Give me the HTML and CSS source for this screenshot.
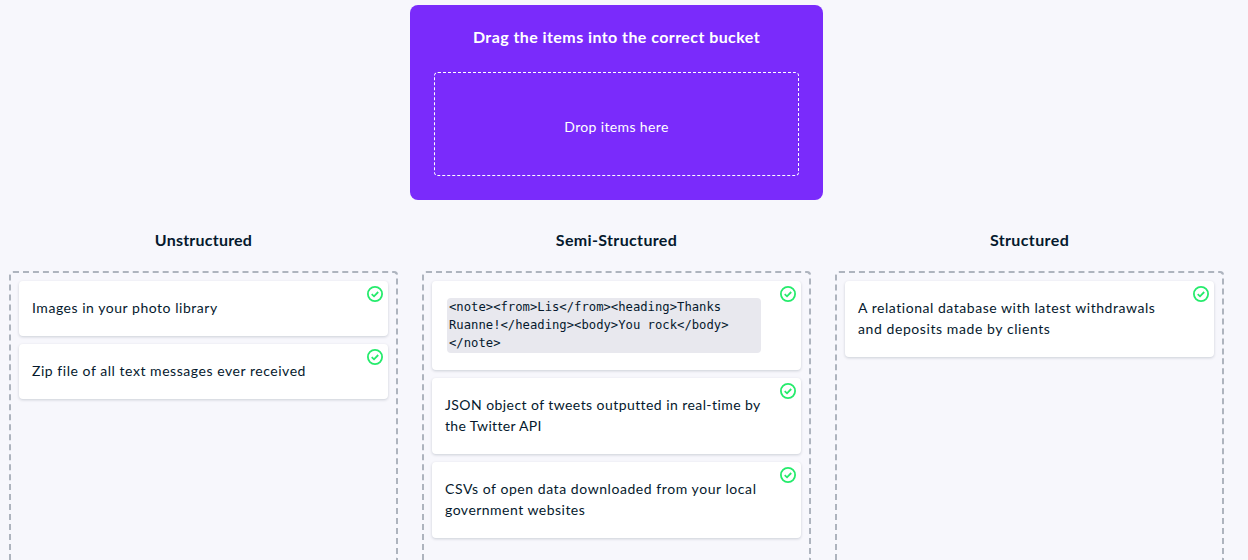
FILE: index.html
```html
<!DOCTYPE html>
<html lang="en">
<head>
<meta charset="utf-8">
<title>Drag and drop exercise</title>
<link rel="stylesheet" href="styles.css">
</head>
<body>
<svg class="defs" width="0" height="0">
  <symbol id="check" viewBox="0 0 18 18">
    <circle cx="9" cy="9" r="7.1"/>
    <path d="M5.7 9.2 8 11.3 12.2 7"/>
  </symbol>
</svg>
<main class="exercise">
  <section class="source">
    <h2 class="title t-drag">Drag the items into the correct bucket</h2>
    <div class="dropzone"><span class="t-drop">Drop items here</span></div>
  </section>
  <div class="buckets">
    <section class="column">
      <h2 class="title t-un">Unstructured</h2>
      <div class="bucket">
        <article class="card"><p class="t-images">Images in your photo library</p><svg class="icon"><use href="#check"/></svg></article>
        <article class="card"><p class="t-zip">Zip file of all text messages ever received</p><svg class="icon"><use href="#check"/></svg></article>
      </div>
    </section>
    <section class="column">
      <h2 class="title t-semi">Semi-Structured</h2>
      <div class="bucket">
        <article class="card"><code class="code">&lt;note&gt;&lt;from&gt;Lis&lt;/from&gt;&lt;heading&gt;Thanks<br>Ruanne!&lt;/heading&gt;&lt;body&gt;You rock&lt;/body&gt;<br>&lt;/note&gt;</code><svg class="icon"><use href="#check"/></svg></article>
        <article class="card"><p class="t-json">JSON object of tweets outputted in real-time by</p><p class="t-api">the Twitter API</p><svg class="icon"><use href="#check"/></svg></article>
        <article class="card"><p class="t-csv">CSVs of open data downloaded from your local</p><p class="t-gov">government websites</p><svg class="icon"><use href="#check"/></svg></article>
      </div>
    </section>
    <section class="column">
      <h2 class="title t-str">Structured</h2>
      <div class="bucket">
        <article class="card"><p class="t-rel">A relational database with latest withdrawals</p><p class="t-dep">and deposits made by clients</p><svg class="icon"><use href="#check"/></svg></article>
      </div>
    </section>
  </div>
</main>
</body>
</html>
```
FILE: styles.css
```css
* { box-sizing: border-box; }
body {
  margin: 0;
  background: #f7f7fc;
  color: #05192d;
  font: 14px/21px Lato, sans-serif;
  letter-spacing: 0.5px;
}
.defs { display: block; }
.exercise {
  display: flex;
  flex-direction: column;
  width: 1215px;
  height: 560px;
  margin-left: 9px;
  padding-top: 5px;
}
.source {
  align-self: center;
  width: 413px;
  height: 195px;
  padding: 21px 24px 24px;
  border-radius: 8px;
  background: #7a2bfb;
  color: #fff;
}
.title {
  margin: 0;
  font-size: 16px;
  line-height: 22px;
  font-weight: 700;
  text-align: center;
  white-space: nowrap;
}
.dropzone {
  display: flex;
  align-items: center;
  justify-content: center;
  height: 104px;
  margin-top: 24px;
  padding-top: 4px;
  border: 1px dashed #fff;
  border-radius: 4px;
}
.buckets {
  display: grid;
  grid-template-columns: repeat(3, 389px);
  gap: 24px;
  margin-top: 29px;
}
.bucket {
  display: flex;
  flex-direction: column;
  gap: 8px;
  height: 289px;
  margin-top: 20px;
  padding: 8px;
  border: 2px dashed #aeb4be;
  border-bottom: 0;
  border-radius: 4px 4px 0 0;
}
.card {
  position: relative;
  padding: 16px 13px 18px;
  border-radius: 4px;
  background: #fff;
  box-shadow: 0 1px 3px rgba(5, 25, 45, 0.18);
}
.card p { margin: 0; white-space: nowrap; }
.code {
  display: block;
  width: 314px;
  height: 55px;
  margin: 1px 0 -1px 2px;
  padding-left: 2px;
  border-radius: 4px;
  background: #e8e8ee;
  font: 12.22px/18px "DejaVu Sans Mono", monospace;
  letter-spacing: 0;
  white-space: nowrap;
}
.icon {
  position: absolute;
  top: 4px;
  right: 4px;
  width: 18px;
  height: 18px;
  fill: none;
  stroke: #25eb6c;
  stroke-width: 1.8;
}
.t-drag { letter-spacing: 0.43px; }
.t-drop { letter-spacing: 0.36px; }
.t-un { letter-spacing: 0.22px; }
.t-semi { letter-spacing: 0.35px; }
.t-str { letter-spacing: 0.38px; }
.t-images { letter-spacing: 0.53px; }
.t-zip { letter-spacing: 0.54px; }
.t-json { letter-spacing: 0.43px; }
.t-api { letter-spacing: 0.33px; }
.t-csv { letter-spacing: 0.56px; }
.t-gov { letter-spacing: 0.48px; }
.t-rel { letter-spacing: 0.54px; }
.t-dep { letter-spacing: 0.58px; }
```
